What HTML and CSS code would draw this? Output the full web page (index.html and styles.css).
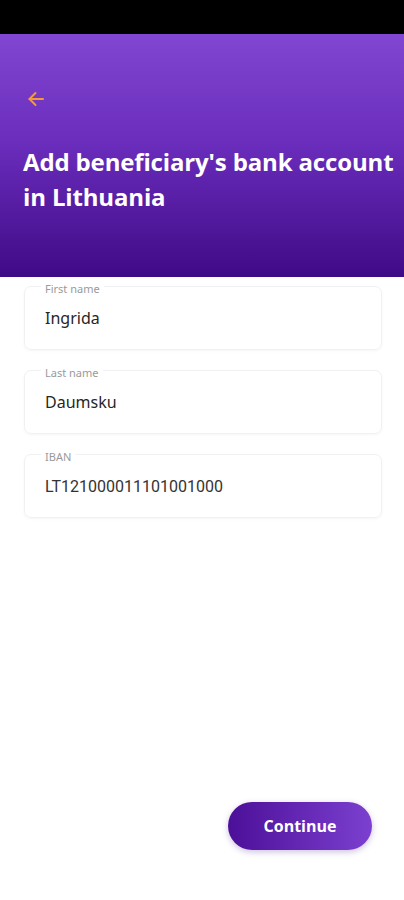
FILE: index.html
```html
<!DOCTYPE html>
<html lang="en">
<head>
    <meta charset="UTF-8">
    <meta name="viewport" content="width=device-width, initial-scale=1.0">
    <title>Add beneficiary</title>
    <link rel="stylesheet" href="styles.css">
</head>
<body>
    <div class="status-bar"></div>

    <header class="top">
        <button class="back-btn" aria-label="Back">
            <svg width="20" height="20" viewBox="0 0 20 20" fill="none" stroke="#f39a3a" stroke-width="2" stroke-linecap="round" stroke-linejoin="round">
                <path d="M17 10H3.5"/>
                <path d="M9.5 4L3.5 10L9.5 16"/>
            </svg>
        </button>
        <h1>Add beneficiary's bank account in Lithuania</h1>
    </header>

    <main class="form">
        <div class="field">
            <span class="field-label">First name</span>
            <div class="field-value">Ingrida</div>
        </div>
        <div class="field">
            <span class="field-label">Last name</span>
            <div class="field-value">Daumsku</div>
        </div>
        <div class="field">
            <span class="field-label">IBAN</span>
            <div class="field-value iban">LT121000011101001000</div>
        </div>
    </main>

    <div class="actions">
        <button class="continue-btn">Continue</button>
    </div>
</body>
</html>
```

FILE: styles.css
```css
* {
    box-sizing: border-box;
}

body {
    margin: 0;
    padding: 0;
    width: 404px;
    min-height: 900px;
    display: flex;
    flex-direction: column;
    background-color: #FFFFFF;
    font-family: 'Noto Sans', 'Open Sans', sans-serif;
    color: #222;
}

.status-bar {
    height: 34px;
    background-color: #000;
}

.top {
    height: 243px;
    padding: 55px 2px 0 23px;
    background: linear-gradient(180deg, #8146d2 0%, #6a2dbc 45%, #3f0a86 100%);
    color: #FFFFFF;
}

.back-btn {
    display: block;
    padding: 0;
    margin: 0 0 0 3px;
    border: none;
    background: none;
    width: 20px;
    height: 20px;
}

.top h1 {
    margin: 35px 0 0;
    font-family: 'Open Sans', 'Noto Sans', sans-serif;
    font-size: 24px;
    font-weight: 700;
    line-height: 35px;
    letter-spacing: -0.15px;
}

.form {
    display: flex;
    flex-direction: column;
    gap: 20px;
    padding: 9px 22px 0 24px;
}

.field {
    position: relative;
    height: 64px;
    display: flex;
    align-items: center;
    padding: 0 20px;
    border: 1px solid #f1f1f3;
    border-radius: 7px;
    box-shadow: 0 1px 3px rgba(0, 0, 0, 0.04);
}

.field-label {
    position: absolute;
    top: -5px;
    left: 16px;
    padding: 0 4px;
    background-color: #FFFFFF;
    font-size: 11px;
    color: #9a9a9a;
    line-height: 14px;
}

.field-value {
    font-size: 16px;
    color: #262626;
}

.field-value.iban {
    font-family: 'Roboto', 'Liberation Sans', sans-serif;
    color: #333;
}

.actions {
    margin-top: auto;
    display: flex;
    justify-content: flex-end;
    padding: 0 32px 50px 0;
}

.continue-btn {
    width: 144px;
    height: 48px;
    border: none;
    border-radius: 24px;
    background: linear-gradient(90deg, #4c0f98 0%, #7c40d0 100%);
    box-shadow: 0 2px 6px rgba(60, 10, 130, 0.25);
    color: #FFFFFF;
    font-family: 'Open Sans', 'Noto Sans', sans-serif;
    font-size: 16px;
    font-weight: 700;
}
```
